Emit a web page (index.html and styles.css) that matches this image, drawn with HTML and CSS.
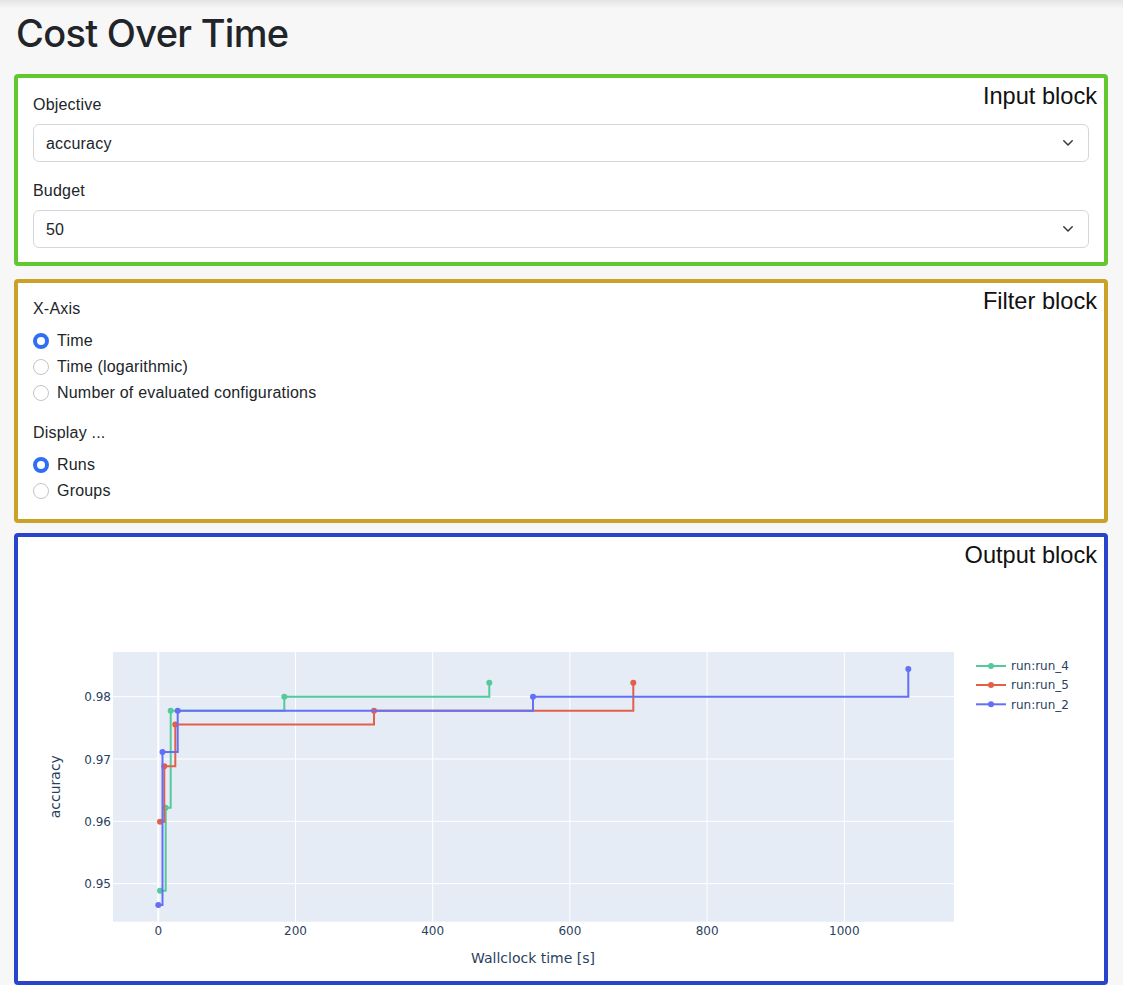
FILE: index.html
```html
<!DOCTYPE html>
<html lang="en">
<head>
<meta charset="utf-8">
<title>Cost Over Time</title>
<link rel="stylesheet" href="styles.css">
</head>
<body>
<div class="page">
  <h1 class="title">Cost Over Time</h1>

  <section class="block block-input">
    <div class="block-tag">Input block</div>
    <div class="field">
      <div class="field-label">Objective</div>
      <div class="select"><span>accuracy</span><svg class="chev" width="10" height="6" viewBox="0 0 10 6"><polyline points="0.8,0.8 5,5 9.2,0.8" fill="none" stroke="#343a40" stroke-width="1.5" stroke-linecap="round" stroke-linejoin="round"/></svg></div>
    </div>
    <div class="field">
      <div class="field-label">Budget</div>
      <div class="select"><span>50</span><svg class="chev" width="10" height="6" viewBox="0 0 10 6"><polyline points="0.8,0.8 5,5 9.2,0.8" fill="none" stroke="#343a40" stroke-width="1.5" stroke-linecap="round" stroke-linejoin="round"/></svg></div>
    </div>
  </section>

  <section class="block block-filter">
    <div class="block-tag">Filter block</div>
    <div class="group">
      <div class="field-label">X-Axis</div>
      <div class="radios">
        <div class="radio"><span class="dot checked"></span><span>Time</span></div>
        <div class="radio"><span class="dot"></span><span>Time (logarithmic)</span></div>
        <div class="radio"><span class="dot"></span><span>Number of evaluated configurations</span></div>
      </div>
    </div>
    <div class="group">
      <div class="field-label">Display ...</div>
      <div class="radios">
        <div class="radio"><span class="dot checked"></span><span>Runs</span></div>
        <div class="radio"><span class="dot"></span><span>Groups</span></div>
      </div>
    </div>
  </section>

  <section class="block block-output">
    <div class="block-tag">Output block</div>
    <svg class="chart" width="1086" height="444" viewBox="18 537 1086 444">
      <rect x="113" y="652" width="841" height="269.7" fill="#e5ecf6"/>
      <g stroke="#ffffff" stroke-width="1">
        <line x1="295.5" y1="652" x2="295.5" y2="921.7"/>
        <line x1="432.7" y1="652" x2="432.7" y2="921.7"/>
        <line x1="569.9" y1="652" x2="569.9" y2="921.7"/>
        <line x1="707.1" y1="652" x2="707.1" y2="921.7"/>
        <line x1="844.3" y1="652" x2="844.3" y2="921.7"/>
        <line x1="113" y1="696.7" x2="954" y2="696.7"/>
        <line x1="113" y1="759" x2="954" y2="759"/>
        <line x1="113" y1="821.3" x2="954" y2="821.3"/>
        <line x1="113" y1="883.7" x2="954" y2="883.7"/>
      </g>
      <line x1="158.3" y1="652" x2="158.3" y2="921.7" stroke="#ffffff" stroke-width="2"/>

      <path d="M160,890.7 H165.7 V807.7 H170.7 V710.7 H284.3 V696.7 H489.3 V682.7" fill="none" stroke="#56c99a" stroke-width="2"/>
      <g fill="#56c99a">
        <circle cx="160" cy="890.7" r="3"/><circle cx="165.7" cy="807.7" r="3"/><circle cx="170.7" cy="710.7" r="3"/><circle cx="284.3" cy="696.7" r="3"/><circle cx="489.3" cy="682.7" r="3"/>
      </g>
      <path d="M160,821.7 H164.3 V766.3 H175.3 V724.5 H374 V710.7 H633.3 V682.7" fill="none" stroke="#e2604a" stroke-width="2"/>
      <g fill="#e2604a">
        <circle cx="160" cy="821.7" r="3"/><circle cx="164.3" cy="766.3" r="3"/><circle cx="175.3" cy="724.5" r="3"/><circle cx="374" cy="710.7" r="3"/><circle cx="633.3" cy="682.7" r="3"/>
      </g>
      <path d="M158.3,905 H162.5 V752 H177.7 V710.7 H533 V696.7 H908.3 V669" fill="none" stroke="#646ff3" stroke-width="2"/>
      <g fill="#646ff3">
        <circle cx="158.3" cy="905" r="3"/><circle cx="162.5" cy="752" r="3"/><circle cx="177.7" cy="710.7" r="3"/><circle cx="533" cy="696.7" r="3"/><circle cx="908.3" cy="669" r="3"/>
      </g>

      <g class="tick" text-anchor="end">
        <text x="111" y="701.2">0.98</text>
        <text x="111" y="763.5">0.97</text>
        <text x="111" y="825.8">0.96</text>
        <text x="111" y="888.2">0.95</text>
      </g>
      <g class="tick" text-anchor="middle">
        <text x="158.3" y="935">0</text>
        <text x="295.5" y="935">200</text>
        <text x="432.7" y="935">400</text>
        <text x="569.9" y="935">600</text>
        <text x="707.1" y="935">800</text>
        <text x="844.3" y="935">1000</text>
      </g>
      <text class="axis-title" x="533" y="963" text-anchor="middle">Wallclock time [s]</text>
      <text class="axis-title" transform="translate(60 786.7) rotate(-90)" text-anchor="middle">accuracy</text>

      <g class="legend">
        <line x1="976" y1="666" x2="1006" y2="666" stroke="#56c99a" stroke-width="2"/>
        <circle cx="991" cy="666" r="3" fill="#56c99a"/>
        <text x="1011" y="670.3">run:run_4</text>
        <line x1="976" y1="685" x2="1006" y2="685" stroke="#e2604a" stroke-width="2"/>
        <circle cx="991" cy="685" r="3" fill="#e2604a"/>
        <text x="1011" y="689.3">run:run_5</text>
        <line x1="976" y1="704.3" x2="1006" y2="704.3" stroke="#646ff3" stroke-width="2"/>
        <circle cx="991" cy="704.3" r="3" fill="#646ff3"/>
        <text x="1011" y="708.6">run:run_2</text>
      </g>
    </svg>
  </section>
</div>
</body>
</html>
```

FILE: styles.css
```css
* {
  box-sizing: border-box;
}

html, body {
  margin: 0;
  padding: 0;
}

body {
  background: linear-gradient(#e4e4e4, #f7f7f7 9px) no-repeat, #f7f7f7;
  font-family: "Liberation Sans", Arial, sans-serif;
  font-size: 16px;
  line-height: 24px;
  letter-spacing: 0.2px;
  color: #212529;
}

.page {
  padding: 10px 15px 0 14px;
}

.title {
  margin: 0 0 18px 0;
  padding-left: 2px;
  font-family: "Inter", "Liberation Sans", sans-serif;
  font-size: 38px;
  font-weight: 500;
  line-height: 46px;
  letter-spacing: -0.7px;
  color: #212529;
}

.block {
  position: relative;
  background: #ffffff;
  border: 4px solid;
  border-radius: 4px;
}

.block-input {
  border-color: #61c82f;
  padding: 14px 15px 14px 15px;
  margin-bottom: 13px;
}

.block-filter {
  border-color: #c9a227;
  padding: 13px 15px 16px 15px;
  margin-bottom: 10px;
}

.block-output {
  border-color: #2944cc;
  padding: 0;
}

.block-tag {
  position: absolute;
  top: 4px;
  right: 7px;
  font-family: "Liberation Sans", Arial, sans-serif;
  font-size: 23.6px;
  line-height: 28px;
  letter-spacing: 0;
  color: #111111;
}

.field + .field {
  margin-top: 16px;
}

.field-label {
  padding-top: 1px;
  height: 24px;
  margin-bottom: 8px;
}

.select {
  display: flex;
  align-items: center;
  justify-content: space-between;
  height: 38px;
  padding: 2px 15px 0 12px;
  border: 1px solid #d3d7db;
  border-radius: 6px;
  background: #ffffff;
}

.chev {
  display: block;
  margin-top: -2px;
}

.group + .group {
  margin-top: 15px;
}

.group .field-label {
  margin-bottom: 7px;
}

.radio {
  display: flex;
  align-items: center;
  gap: 8px;
  height: 26px;
  padding-top: 2px;
}

.dot {
  flex: none;
  width: 16px;
  height: 16px;
  border-radius: 50%;
  border: 1px solid #c4c4c4;
  background: #ffffff;
}

.dot.checked {
  border: 4.5px solid #2f6ff4;
  background: #ffffff;
}

.chart {
  display: block;
}

.tick text,
.legend text {
  font-family: "DejaVu Sans", Verdana, sans-serif;
  font-size: 12px;
  fill: #2a3f5f;
  letter-spacing: 0;
}

.axis-title {
  font-family: "DejaVu Sans", Verdana, sans-serif;
  font-size: 14px;
  fill: #2a3f5f;
  letter-spacing: 0;
}
```
